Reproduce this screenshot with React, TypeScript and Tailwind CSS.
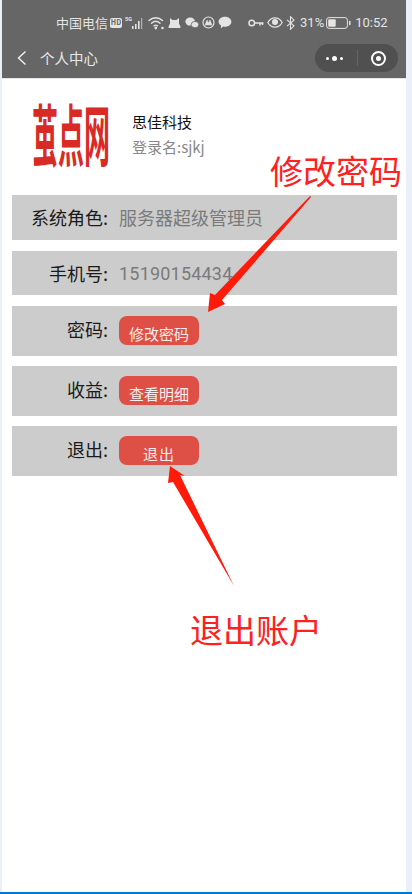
import React from 'react';

const CJK = { fontFamily: '"Noto Sans CJK SC", Roboto, sans-serif' };

const StatusIcons = () => (
  <div className="flex items-center text-[#e4e4e4]">
    {/* HD */}
    <span className="flex h-[10px] w-[12px] items-center justify-center rounded-[2px] bg-[#e4e4e4] text-[7px] font-bold leading-none text-[#666]">HD</span>
    {/* 5G signal */}
    <svg width="20" height="14" viewBox="0 0 20 14" className="ml-[3px]" fill="currentColor">
      <text x="0" y="5" fontSize="5.5" fontWeight="700" fontFamily="Roboto, sans-serif">5G</text>
      <rect x="7" y="10" width="1.6" height="3" />
      <rect x="10" y="8" width="1.6" height="5" />
      <rect x="13" y="5" width="1.6" height="8" />
      <rect x="16" y="2" width="1.2" height="11" opacity="0.6" />
    </svg>
    {/* wifi */}
    <svg width="17" height="14" viewBox="0 0 17 14" className="ml-[3px]" fill="none" stroke="currentColor" strokeWidth="1.4" strokeLinecap="round">
      <path d="M1 4.5C5 .8 10.5 .8 14.5 4.5" />
      <path d="M3.5 7.2C6 5 9.5 5 12 7.2" />
      <path d="M6 9.8C7 9 8.5 9 9.5 9.8" />
      <circle cx="7.8" cy="12" r="0.7" fill="currentColor" />
      <circle cx="14.5" cy="12" r="0.6" fill="currentColor" />
    </svg>
    {/* cat */}
    <svg width="13" height="12" viewBox="0 0 13 12" className="ml-[3px]" fill="currentColor">
      <path d="M2 1l2.5 2h4L11 1v6c1 1 1.5 2 1.5 4H.5C.5 9 1 8 2 7z" />
    </svg>
    {/* wechat */}
    <svg width="14" height="12" viewBox="0 0 14 12" className="ml-[4px]" fill="currentColor">
      <ellipse cx="5.2" cy="4.6" rx="4.8" ry="4" />
      <ellipse cx="10" cy="7.6" rx="3.8" ry="3.2" stroke="#666" strokeWidth="0.8" />
    </svg>
    {/* round app icon */}
    <svg width="13" height="13" viewBox="0 0 13 13" className="ml-[3px]" fill="none" stroke="currentColor">
      <circle cx="6.5" cy="6.5" r="5.5" strokeWidth="1.2" />
      <path d="M3 9l2-5 1.5 3 1.5-3 2 5z" fill="currentColor" strokeWidth="0.5" />
    </svg>
    {/* chat bubble */}
    <svg width="14" height="13" viewBox="0 0 14 13" className="ml-[3px]" fill="currentColor">
      <path d="M7 .8c3.6 0 6.4 2.2 6.4 5S10.600 10.800 7 10.800c-.6 0-1.200-.1-1.700-.2L2.800 12.300l.3-2.700C1.500 8.700.6 7.300.6 5.800.6 3 3.400.8 7 .8z" />
    </svg>
    {/* key */}
    <svg width="16" height="10" viewBox="0 0 16 10" className="ml-[16px]" fill="none" stroke="currentColor" strokeWidth="1.5">
      <circle cx="3.800" cy="5" r="2.800" />
      <path d="M6.600 5H15.500M12 5v2.500M14.500 5v2" />
    </svg>
    {/* eye */}
    <svg width="16" height="11" viewBox="0 0 16 11" className="ml-[3px]" fill="none" stroke="currentColor" strokeWidth="1.200">
      <path d="M.8 5.500C2.600 2.300 5 .8 8 .8s5.400 1.500 7.200 4.700C13.400 8.700 11 10.200 8 10.200S2.600 8.700.8 5.500z" />
      <circle cx="8" cy="5" r="3" fill="currentColor" stroke="none" />
    </svg>
    {/* bluetooth */}
    <svg width="9" height="14" viewBox="0 0 9 14" className="ml-[3px]" fill="none" stroke="currentColor" strokeWidth="1.100">
      <path d="M1 3.800l7 6-3.500 3.500V.7L8 4.200l-7 6" />
    </svg>
    <span className="ml-[5px] text-[13px] leading-none" style={{ fontFamily: 'Roboto, sans-serif' }}>31%</span>
    {/* battery */}
    <svg width="25" height="12" viewBox="0 0 25 12" className="ml-[2px]">
      <rect x="0.600" y="0.600" width="20.800" height="10.800" rx="2.500" fill="none" stroke="currentColor" strokeWidth="1" />
      <rect x="2.200" y="2.200" width="7.500" height="7.600" rx="1" fill="currentColor" />
      <rect x="23" y="3.800" width="1.500" height="4.400" rx="0.700" fill="currentColor" />
    </svg>
    <span className="ml-[4px] text-[13px] leading-none" style={{ fontFamily: 'Roboto, sans-serif' }}>10:52</span>
  </div>
);

const Row = ({ label, value, button, h }: { label: string; value?: string; button?: string; h: string }) => (
  <div className={`flex bg-[#cccccc] ${h} ${button ? 'items-start pt-[10px]' : 'items-center'}`}>
    <div className={`w-[96px] shrink-0 text-right text-[18px] text-[#1a1a1a] ${button ? '-mt-[1px] leading-[28px]' : ''}`}>{label}</div>
    {value && <div className={`ml-[11px] text-[18px] text-[#7a7a7a] ${value.startsWith('1') ? 'tracking-[0.2px]' : ''}`} style={{ fontFamily: value.startsWith('1') ? 'Roboto, sans-serif' : undefined }}>{value}</div>}
    {button && (
      <div className={`ml-[11px] flex h-[29px] w-[80px] items-end justify-center rounded-[8px] bg-[#de5045] pb-[1px] text-[15px] leading-[20px] text-[#f8eeee] ${button.length === 2 ? 'tracking-[1px]' : ''}`}>
        {button}
      </div>
    )}
  </div>
);

const App: React.FC = () => {
  return (
    <div className="relative h-[894px] w-[412px] overflow-hidden bg-[#ebf0f8] pl-[2px] pr-[6px]" style={CJK}>
      <div className="h-[892px] bg-white">
        {/* Status bar + nav */}
        <header className="h-[79px] border-b border-[#e6e6e6] bg-[#666666]">
          <div className="flex h-[44px] items-center pl-[54px] pt-[1px]">
            <span className="mr-[2px] text-[13px] leading-none text-[#e4e4e4]">中国电信</span>
            <StatusIcons />
          </div>
          <div className="flex items-center justify-between pr-[8px]">
            <div className="flex items-center pl-[14px]">
              <svg width="12" height="16" viewBox="0 0 12 16" fill="none" stroke="#f2f2f2" strokeWidth="1.400">
                <path d="M9.500 1.500L2.500 8l7 6.500" />
              </svg>
              <span className="ml-[12px] text-[14.500px] leading-none text-[#e8e8e8]">个人中心</span>
            </div>
            <div className="flex h-[28px] w-[83px] items-center rounded-full bg-[#505050]">
              <div className="flex w-[42px] items-center gap-[3px] pl-[11px]">
                <span className="h-[3px] w-[3px] rounded-full bg-white"></span>
                <span className="h-[5px] w-[5px] rounded-full bg-white"></span>
                <span className="h-[3px] w-[3px] rounded-full bg-white"></span>
              </div>
              <div className="h-[16px] w-px bg-[#666666]"></div>
              <div className="flex flex-1 items-center justify-center">
                <div className="flex h-[15px] w-[15px] items-center justify-center rounded-full border-2 border-white">
                  <span className="h-[5px] w-[5px] rounded-full bg-white"></span>
                </div>
              </div>
            </div>
          </div>
        </header>

        {/* User info */}
        <div className="flex h-[116px] items-start pl-[30px] pt-[25px]">
          <svg width="80" height="68" viewBox="0 0 80 68" className="shrink-0 overflow-visible">
            <text transform="scale(1 2.600)" x="0" y="22" fontSize="26" fontWeight="700" fill="#d92b25" fontFamily='"Noto Sans CJK SC", sans-serif' textLength="78" lengthAdjust="spacing">茧点网</text>
          </svg>
          <div className="ml-[20px] pt-[7px]">
            <div className="text-[15px] leading-[22px] text-[#111]">思佳科技</div>
            <div className="mt-[3px] text-[15px] leading-[22px] text-[#888888]">登录名:sjkj</div>
          </div>
        </div>

        {/* Rows */}
        <div className="flex flex-col gap-[10px] pl-[10px] pr-[9px]">
          <Row label="系统角色:" value="服务器超级管理员" h="mb-[1px] h-[45px]" />
          <Row label="手机号:" value="15190154434" h="mb-[1px] h-[44px]" />
          <Row label="密码:" button="修改密码" h="h-[50px]" />
          <Row label="收益:" button="查看明细" h="h-[50px]" />
          <Row label="退出:" button="退出" h="h-[50px]" />
        </div>
      </div>

      {/* Annotations */}
      <div className="absolute left-[270px] top-[149px] text-[33px] leading-[42px] text-[#ff2020]">修改密码</div>
      <div className="absolute left-[190px] top-[608px] text-[33px] leading-[42px] text-[#ff2020]">退出账户</div>
      <svg width="412" height="894" viewBox="0 0 412 894" className="pointer-events-none absolute left-0 top-0">
        <polygon points="311,197 222,300 225,304 208,312 210,293 215,295 310,196" fill="#ff1a0a" />
        <polygon points="234,586 180,475 185,476 170,466 168,483 173,482" fill="#ff1a0a" />
      </svg>

      {/* Bottom edge */}
      <div className="absolute inset-x-0 bottom-0 h-[2px] bg-[#0078d4]"></div>
    </div>
  );
};

export default App;
